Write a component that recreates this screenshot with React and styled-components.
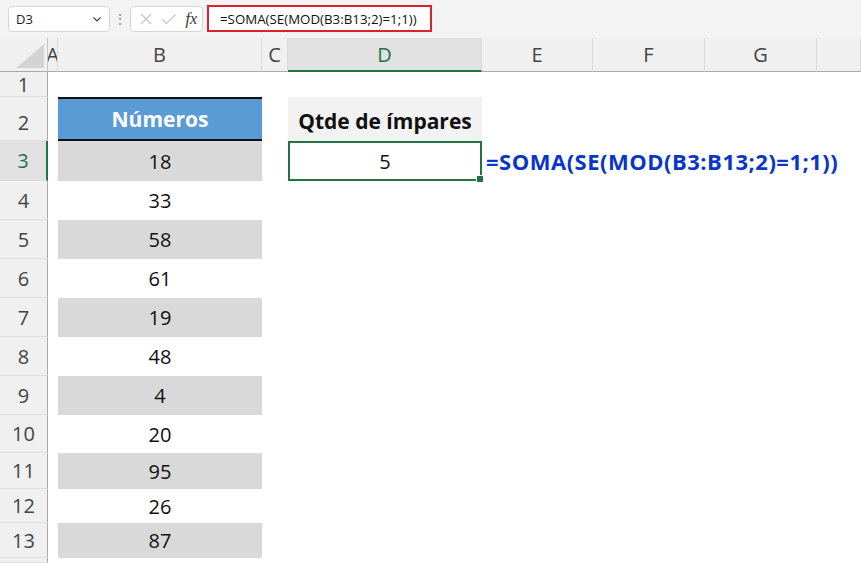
import React from 'react';
import styled, { createGlobalStyle, css } from 'styled-components';

const GlobalStyle = createGlobalStyle`
  html, body {
    margin: 0;
    padding: 0;
    background: #ffffff;
    overflow: hidden;
  }
  body {
    font-family: 'Open Sans', 'Noto Sans', sans-serif;
  }
`;

const GREEN = '#217346';

const columns = [
  { key: 'A', width: 10 },
  { key: 'B', width: 204 },
  { key: 'C', width: 26 },
  { key: 'D', width: 194 },
  { key: 'E', width: 111 },
  { key: 'F', width: 112 },
  { key: 'G', width: 112 },
  { key: 'H', width: 44 },
];

const rowHeights = [25, 44, 40, 39, 39, 39, 39, 39, 39, 38, 36, 34, 35, 5];

const numbers = [18, 33, 58, 61, 19, 48, 4, 20, 95, 26, 87];

const Window = styled.div`
  width: 861px;
  height: 563px;
  overflow: hidden;
  background: #f3f3f3;
  display: flex;
  flex-direction: column;
`;

const FormulaBar = styled.div`
  flex: none;
  height: 38px;
  display: flex;
  align-items: center;
  padding: 0 0 0 8px;
  box-sizing: border-box;
`;

const NameBox = styled.div`
  width: 102px;
  height: 26px;
  box-sizing: border-box;
  border: 1px solid #d6d6d6;
  border-radius: 4px;
  background: #fff;
  display: flex;
  align-items: center;
  justify-content: space-between;
  padding: 0 6px 0 7px;
  font-size: 13px;
  color: #222;
`;

const Grip = styled.div`
  width: 20px;
  display: flex;
  justify-content: center;
  color: #8a8a8a;
  font-size: 14px;
  line-height: 1;
`;

const ActionBox = styled.div`
  width: 73px;
  height: 26px;
  box-sizing: border-box;
  border: 1px solid #d6d6d6;
  border-radius: 4px;
  background: #fff;
  display: flex;
  align-items: center;
  justify-content: space-between;
  padding: 0 5px 0 8px;
`;

const FxLabel = styled.span`
  font-family: 'Liberation Serif', serif;
  font-style: italic;
  font-size: 16px;
  color: #333;
`;

const FormulaInput = styled.div`
  margin-left: 4px;
  margin-top: -1px;
  width: 225px;
  height: 27px;
  box-sizing: border-box;
  border: 2px solid #d7242c;
  background: #fff;
  display: flex;
  align-items: center;
  padding-left: 11px;
  font-size: 13.3px;
  color: #111;
`;

const Sheet = styled.div`
  flex: none;
  display: grid;
  grid-template-columns: 48px ${columns.map(c => `${c.width}px`).join(' ')};
  grid-template-rows: 34px ${rowHeights.map(h => `${h}px`).join(' ')};
  background: #fff;
`;

const Corner = styled.div`
  background: #f0f0f0;
  border-right: 1px solid #c6c6c6;
  border-bottom: 1px solid #a9a9a9;
  display: flex;
  align-items: flex-end;
  justify-content: flex-end;
  padding: 0 3px 3px 0;
  box-sizing: border-box;
`;

const ColHeader = styled.div`
  background: #f0f0f0;
  border-right: 1px solid #dadada;
  border-bottom: 1px solid #a9a9a9;
  box-sizing: border-box;
  display: flex;
  align-items: center;
  justify-content: center;
  font-size: 20px;
  color: #444;
  overflow: hidden;
  white-space: nowrap;

  ${({ $active }) =>
    $active &&
    css`
      background: #e1e1e1;
      color: ${GREEN};
      border-bottom: 2px solid ${GREEN};
    `}
`;

const RowHeader = styled.div`
  background: #f0f0f0;
  border-right: 1px solid #a9a9a9;
  border-bottom: 1px solid #dedede;
  box-sizing: border-box;
  display: flex;
  align-items: center;
  justify-content: center;
  font-size: 20px;
  color: #444;
  padding-top: ${({ $pad }) => $pad || 0}px;

  ${({ $active }) =>
    $active &&
    css`
      background: #e1e1e1;
      color: ${GREEN};
      border-right: 2px solid ${GREEN};
    `}
`;

const Cell = styled.div`
  position: relative;
  box-sizing: border-box;
  display: flex;
  align-items: center;
  justify-content: center;
  font-size: 20px;
  color: #111;
  white-space: nowrap;
  background: ${({ $fill }) => $fill || 'transparent'};
`;

const HeaderCell = styled(Cell)`
  background: #5b9bd5;
  color: #fff;
  font-weight: 700;
  font-size: 21px;
  border-top: 2px solid #111;
  border-bottom: 2px solid #111;
`;

const TitleCell = styled(Cell)`
  background: #f2f2f2;
  font-weight: 700;
  font-size: 21px;
  color: #111;
  padding-top: 4px;
`;

const SelectedCell = styled(Cell)`
  border: 2px solid ${GREEN};
`;

const FillHandle = styled.span`
  position: absolute;
  right: -4px;
  bottom: -4px;
  width: 6px;
  height: 6px;
  background: ${GREEN};
  border: 1px solid #fff;
`;

const FormulaNote = styled(Cell)`
  justify-content: flex-start;
  overflow: visible;
  padding-left: 4px;
  font-weight: 700;
  font-size: 22px;
  letter-spacing: 0.5px;
  color: #0936c8;
  z-index: 1;
`;

const Chevron = () => (
  <svg width="12" height="12" viewBox="0 0 12 12">
    <path d="M2.5 4.5 L6 8 L9.5 4.5" fill="none" stroke="#444" strokeWidth="1.2" />
  </svg>
);

const CrossIcon = () => (
  <svg width="14" height="14" viewBox="0 0 14 14">
    <path d="M2 2 L12 12 M12 2 L2 12" fill="none" stroke="#c4c4c4" strokeWidth="1.2" />
  </svg>
);

const CheckIcon = () => (
  <svg width="16" height="14" viewBox="0 0 16 14">
    <path d="M1.5 7.5 L5.5 11.5 L14.5 2.5" fill="none" stroke="#c4c4c4" strokeWidth="1.2" />
  </svg>
);

const CornerTriangle = () => (
  <svg width="28" height="24" viewBox="0 0 28 24">
    <path d="M28 0 L28 24 L0 24 Z" fill="#d3d3d3" />
  </svg>
);

const App = () => {
  const rows = rowHeights.map((h, i) => i + 1);

  const renderCell = (row, col) => {
    const key = `${col}${row}`;
    if (col === 'B' && row === 2) return <HeaderCell key={key}>Números</HeaderCell>;
    if (col === 'B' && row >= 3 && row <= 13) {
      const n = numbers[row - 3];
      return (
        <Cell key={key} $fill={row % 2 === 1 ? '#d9d9d9' : null}>
          {n}
        </Cell>
      );
    }
    if (col === 'D' && row === 2) return <TitleCell key={key}>Qtde de ímpares</TitleCell>;
    if (col === 'D' && row === 3)
      return (
        <SelectedCell key={key}>
          5
          <FillHandle />
        </SelectedCell>
      );
    if (col === 'E' && row === 3)
      return <FormulaNote key={key}>=SOMA(SE(MOD(B3:B13;2)=1;1))</FormulaNote>;
    return <Cell key={key} />;
  };

  return (
    <Window>
      <GlobalStyle />
      <FormulaBar>
        <NameBox>
          <span>D3</span>
          <Chevron />
        </NameBox>
        <Grip>⋮</Grip>
        <ActionBox>
          <CrossIcon />
          <CheckIcon />
          <FxLabel>fx</FxLabel>
        </ActionBox>
        <FormulaInput>=SOMA(SE(MOD(B3:B13;2)=1;1))</FormulaInput>
      </FormulaBar>
      <Sheet>
        <Corner>
          <CornerTriangle />
        </Corner>
        {columns.map(c => (
          <ColHeader key={c.key} $active={c.key === 'D'}>
            {c.key === 'H' ? '' : c.key}
          </ColHeader>
        ))}
        {rows.map(r => (
          <React.Fragment key={r}>
            <RowHeader $active={r === 3} $pad={r === 2 ? 8 : 0}>
              {r <= 13 ? r : ''}
            </RowHeader>
            {columns.map(c => renderCell(r, c.key))}
          </React.Fragment>
        ))}
      </Sheet>
    </Window>
  );
};

export default App;
